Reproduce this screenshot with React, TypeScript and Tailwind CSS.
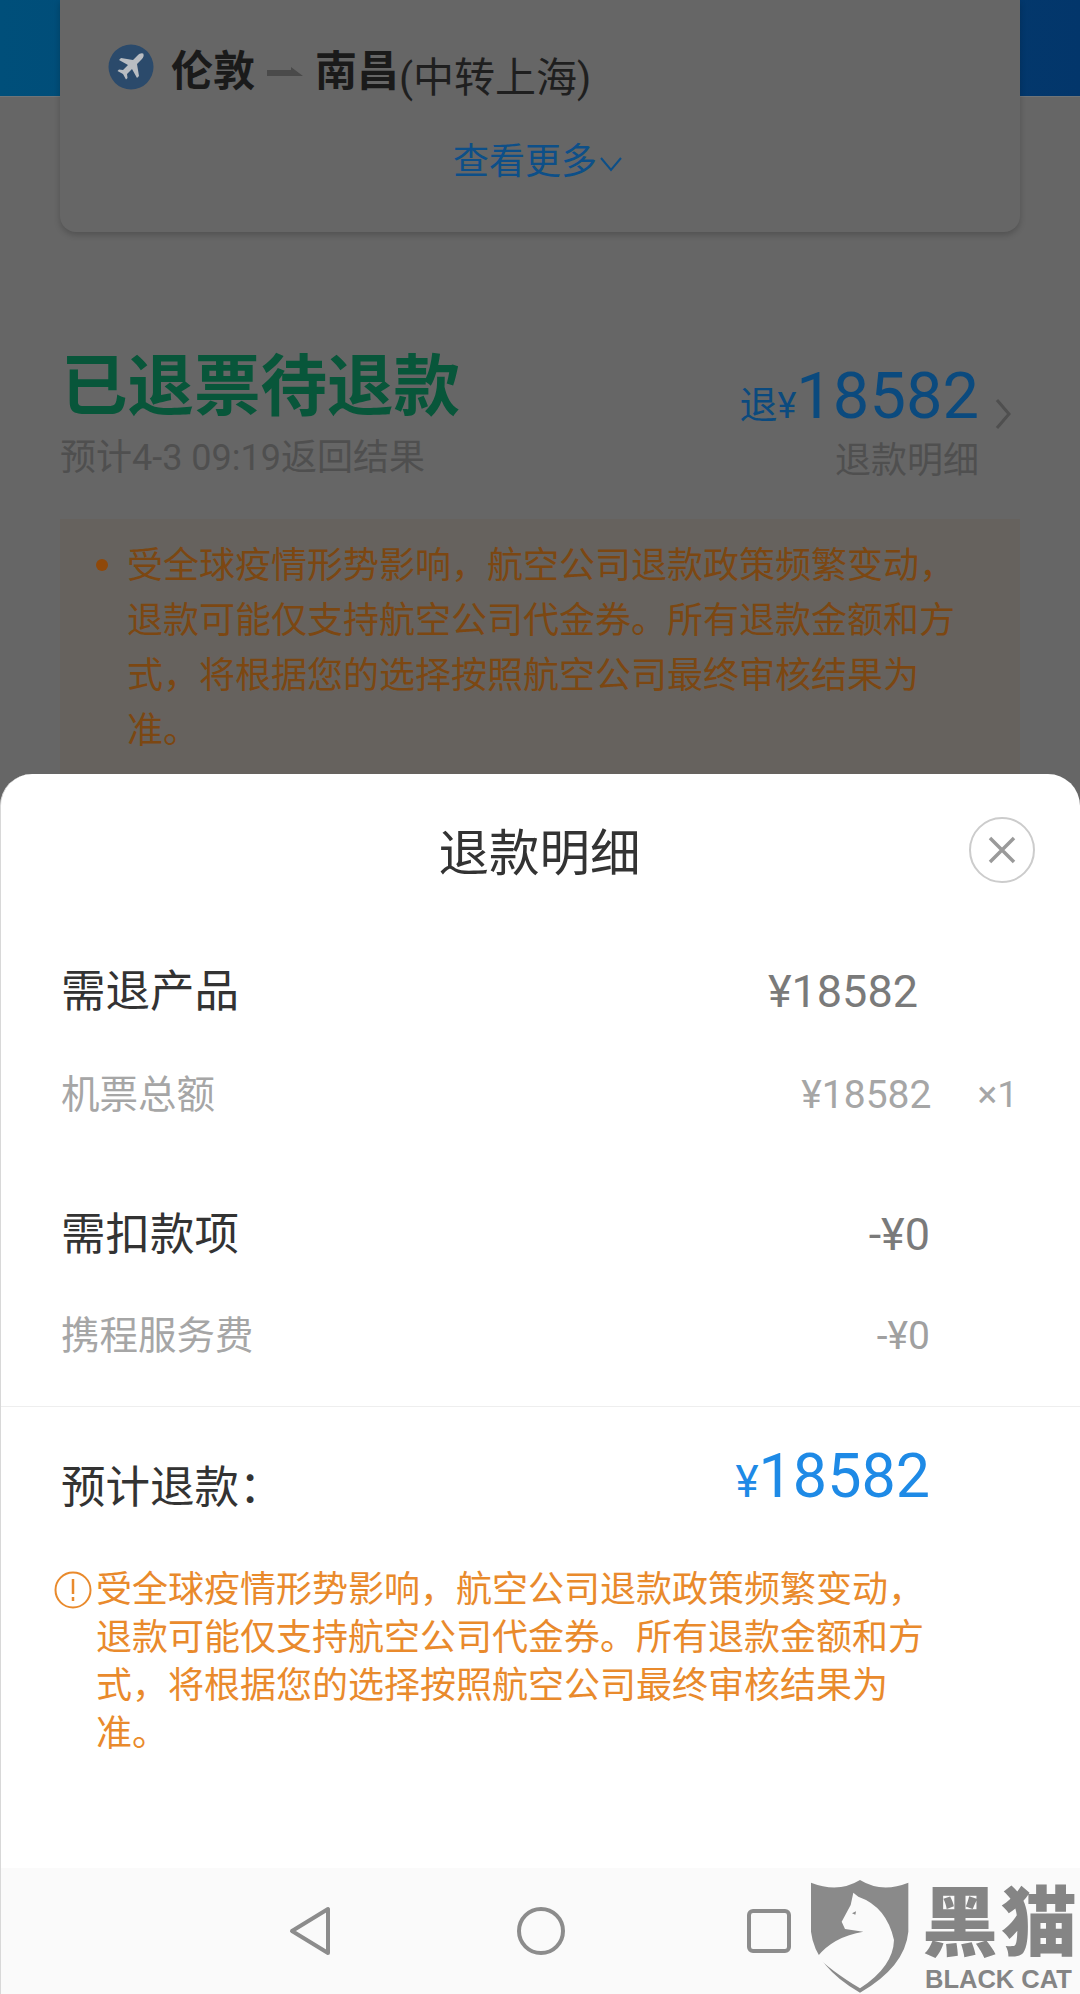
const sans = "font-['Roboto','Noto_Sans_CJK_SC',sans-serif]";

const notice = "受全球疫情形势影响，航空公司退款政策频繁变动，退款可能仅支持航空公司代金券。所有退款金额和方式，将根据您的选择按照航空公司最终审核结果为准。";

function PlaneBadge() {
  return (
    <svg width="46" height="46" viewBox="0 0 46 46" className="shrink-0">
      <circle cx="23" cy="23" r="22.5" fill="#2b4a6b" />
      <path
        d="M36 10c-2-1.500-4.500-.5-6.500 1.500L25 16l-12-2-2 2 9 5-5 5-4-.5-1.500 1.500 5.500 3 3 5.500 1.500-1.500-.5-4 5-5 5 9 2-2-2-12 4.500-4.500c2-2 3-4.500 1.500-6z"
        fill="#b9bdc2"
      />
    </svg>
  );
}

function Logo() {
  return (
    <div className="absolute right-0 bottom-0 w-[300px] h-[134px]">
      <svg width="300" height="134" viewBox="0 0 900 402" className="absolute inset-0">
        <path d="M93 68Q175 100 240 60Q305 100 385 68L385 215Q375 320 240 398Q105 320 93 215Z" fill="#8a8a8a" />
        <path
          d="M220 98L235 110Q320 140 342 240Q340 320 240 385Q150 330 112 290Q160 230 250 215L195 207L185 185L212 135Z"
          fill="#fafafa"
        />
        <path d="M216 160L228 154L226 164Z" fill="#8a8a8a" />
      </svg>
      <div className="absolute left-[142px] top-[22px] w-[158px] text-[76px] leading-[84px] font-black text-[#858585] whitespace-nowrap tracking-[3px]">
        黑猫
      </div>
      <div className="absolute left-[145px] top-[108px] text-[25.5px] leading-[22px] font-bold text-[#858585] whitespace-nowrap font-['Liberation_Sans',sans-serif]">
        BLACK CAT
      </div>
    </div>
  );
}

function Row({
  label,
  value,
  top,
  big,
  extra,
  valueRight = 150,
}: {
  label: string;
  value: string;
  top: number;
  big?: boolean;
  extra?: string;
  valueRight?: number;
}) {
  return (
    <div
      className={`flex items-center justify-between pl-[60px] ${
        big ? "h-[60px] text-[44.5px] leading-[60px]" : "h-[50px] text-[38.5px] leading-[50px]"
      }`}
      style={{ marginTop: top, paddingRight: extra ? 62 : valueRight }}
    >
      <span className={big ? "text-[#333333]" : "text-[#a6a6a6]"}>{label}</span>
      {extra ? (
        <span className="flex items-center text-[#a6a6a6]">
          <span className="text-[39px]">{value}</span>
          <span className="ml-[46px] text-[37px]">{extra}</span>
        </span>
      ) : (
        <span className={big ? "text-[#7a7a7a] text-[45px]" : "text-[#a0a0a0] text-[39px]"}>{value}</span>
      )}
    </div>
  );
}

export default function App() {
  return (
    <div className={`relative w-[1080px] h-[1994px] overflow-hidden bg-[#666666] ${sans}`}>
      <div className="absolute inset-x-0 top-0 h-[97px] bg-gradient-to-r from-[#004f7a] to-[#03366b] border-b border-[#6f7478]" />

      <div className="relative mx-[60px] h-[232px] rounded-b-2xl bg-[#666666] shadow-[0_3px_6px_rgba(0,0,0,0.2)] flex flex-col">
        <div className="flex items-start pl-[48px] pt-[44px] h-[108px]">
          <PlaneBadge />
          <span className="ml-[17px] text-[42px] leading-[56px] font-bold text-[#1a1a1a]">伦敦</span>
          <svg width="36" height="10" viewBox="0 0 36 10" className="mx-[12px] mt-[23px]">
            <path d="M0 3H24V0L36 9H0Z" fill="#4a4a4a" />
          </svg>
          <span className="text-[42px] leading-[56px] font-bold text-[#1a1a1a]">南昌</span>
          <span className="text-[41px] leading-[56px] text-[#1f1f1f] mt-[6px]">(中转上海)</span>
        </div>
        <div className="flex items-center justify-center mt-[29px] pr-[4px] text-[36px] leading-[50px] text-[#0d4f88]">
          <span>查看更多</span>
          <svg width="24" height="16" viewBox="0 0 24 16" className="ml-[2px] mt-[4px]">
            <path d="M2 2L12 14L22 2" fill="none" stroke="#0d4f88" strokeWidth="2" />
          </svg>
        </div>
      </div>

      <div className="flex justify-between pl-[61px] pr-[69px]">
        <div className="mt-[122px]">
          <div className="text-[66.5px] leading-[66px] font-bold text-[#08563a]">已退票待退款</div>
          <div className="mt-[13px] -ml-[1px] text-[36px] leading-[50px] text-[#4f4f4f]">预计4-3 09:19返回结果</div>
        </div>
        <div className="flex mt-[124px]">
          <div className="flex flex-col items-end">
            <div className="flex items-baseline h-[80px] leading-[80px] text-[#0b4a7e]">
              <span className="text-[38px]">退</span>
              <span className="text-[36px]">¥</span>
              <span className="text-[65px]">18582</span>
            </div>
            <div className="text-[36px] leading-[50px] text-[#4f4f4f]">退款明细</div>
          </div>
          <svg width="16" height="32" viewBox="0 0 16 32" className="ml-[16px] mt-[42px]">
            <path d="M2 2L14 16L2 30" fill="none" stroke="#4f4f4f" strokeWidth="3" />
          </svg>
        </div>
      </div>

      <div className="mx-[60px] mt-[33px] h-[300px] bg-[#66625e] pt-[20px] pl-[67px] flex">
        <span className="absolute left-[96px] top-[559px] w-[12px] h-[12px] rounded-full bg-[#8f4809]" />
        <p className="w-[832px] text-[36px] leading-[55px] text-[#7c4712]">{notice}</p>
      </div>

      <div className="absolute inset-x-0 top-[774px] h-[1220px] bg-white rounded-t-[32px] border-l border-[#d8d8d8] flex flex-col">
        <div className="relative mt-[50px] h-[60px] flex items-center justify-center pr-[2px] text-[50.5px] leading-[60px] text-[#333333]">
          退款明细
          <div className="absolute left-[968px] top-[-7px] w-[66px] h-[66px] rounded-full border-2 border-[#cccccc] flex items-center justify-center">
            <svg width="30" height="30" viewBox="0 0 30 30">
              <path d="M3 3L27 27M27 3L3 27" stroke="#9a9a9a" strokeWidth="3.500" />
            </svg>
          </div>
        </div>

        <Row label="需退产品" value="¥18582" top={78} big valueRight={162} />
        <Row label="机票总额" value="¥18582" top={48} extra="×1" />
        <Row label="需扣款项" value="-¥0" top={85} big />
        <Row label="携程服务费" value="-¥0" top={46} />

        <div className="mt-[45px] h-[1px] bg-[#eeeeee]" />

        <div className="mt-[29px] flex justify-between pl-[60px] pr-[150px] h-[80px]">
          <span className="mt-[22px] text-[44.5px] leading-[60px] text-[#333333]">预计退款：</span>
          <span className="flex items-baseline leading-[80px] text-[#1e8ae6]">
            <span className="text-[44px]">¥</span>
            <span className="text-[61px]">18582</span>
          </span>
        </div>

        <div className="mt-[50px] pl-[53px] flex">
          <svg width="38" height="38" viewBox="0 0 38 38" className="mt-[5px] mr-[4px] shrink-0">
            <circle cx="19" cy="19" r="17.500" fill="none" stroke="#e98a2c" strokeWidth="2" />
            <path d="M19 8V23M19 26V30" stroke="#e98a2c" strokeWidth="2.500" />
          </svg>
          <p className="w-[832px] text-[36px] leading-[48px] text-[#e98a2c]">{notice}</p>
        </div>

        <div className="mt-auto h-[126px] bg-[#fafafa] flex items-center justify-center pr-[3px]">
          <svg width="44" height="50" viewBox="0 0 44 50">
            <path d="M40 3V47L4 25Z" fill="none" stroke="#8c8c8c" strokeWidth="4" strokeLinejoin="round" />
          </svg>
          <svg width="48" height="48" viewBox="0 0 48 48" className="ml-[185px]">
            <circle cx="24" cy="24" r="22" fill="none" stroke="#8c8c8c" strokeWidth="4" />
          </svg>
          <svg width="44" height="44" viewBox="0 0 44 44" className="ml-[182px]">
            <rect x="2" y="2" width="40" height="40" rx="4" fill="none" stroke="#8c8c8c" strokeWidth="4" />
          </svg>
        </div>

        <Logo />
      </div>
    </div>
  );
}
